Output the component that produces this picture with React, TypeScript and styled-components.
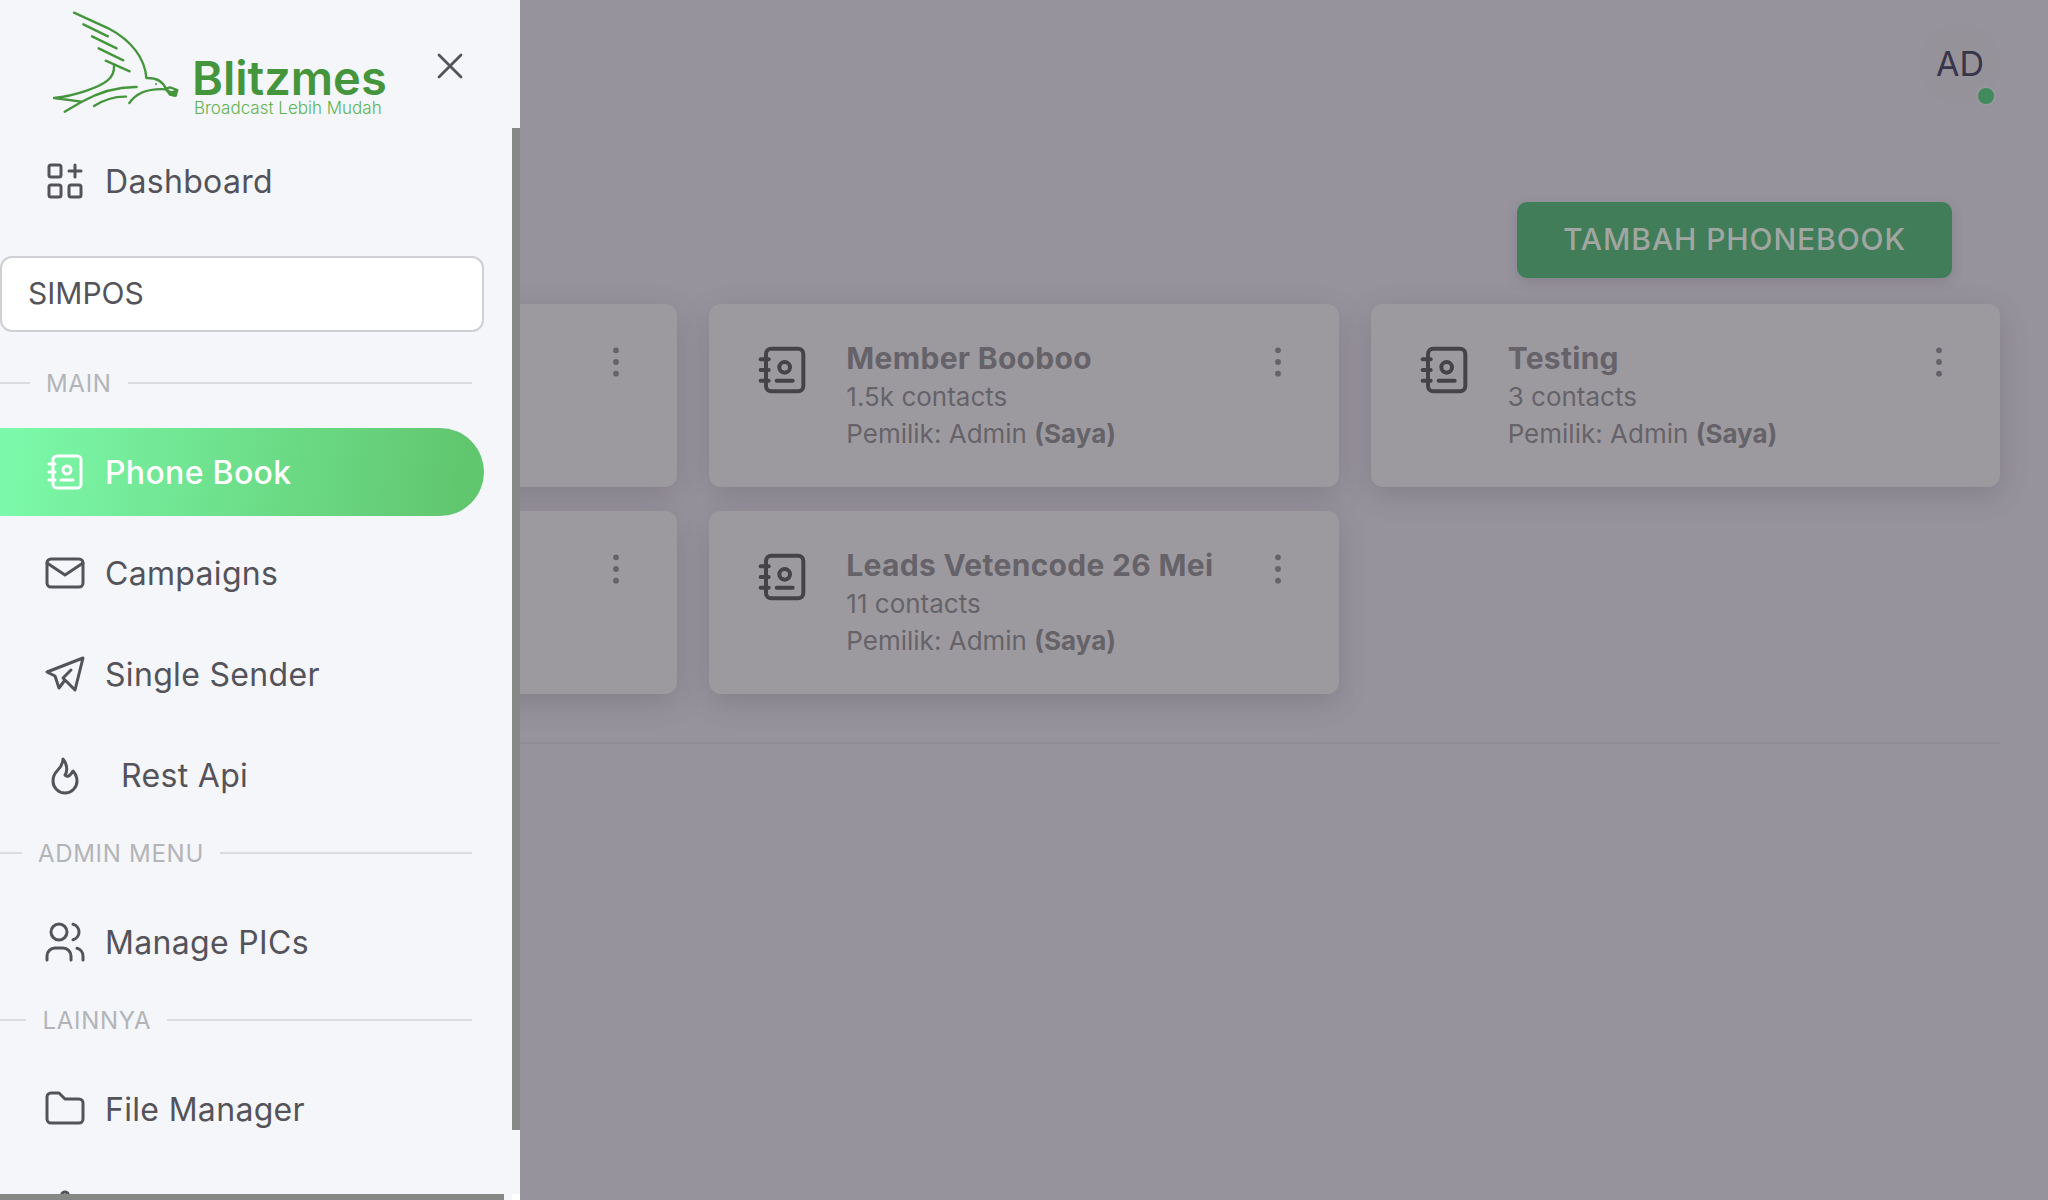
import React from "react";
import styled, { createGlobalStyle } from "styled-components";

const GlobalStyle = createGlobalStyle`
  *, *::before, *::after { box-sizing: border-box; }
  body {
    margin: 0;
    background: #97939d;
    color: #656369;
    font-family: Inter, "Liberation Sans", sans-serif;
  }
  button, select { font: inherit; color: inherit; }
`;

/* ---------- icons ---------- */

const StrokeIcon = styled.svg<{ $size: number }>`
  display: block;
  flex: none;
  width: ${(p) => p.$size}px;
  height: ${(p) => p.$size}px;
  fill: none;
  stroke: currentColor;
  stroke-width: 1.5;
  stroke-linecap: round;
  stroke-linejoin: round;
`;

const shapes = {
  dashboard: [
    "M5 4h4a1 1 0 0 1 1 1v4a1 1 0 0 1 -1 1h-4a1 1 0 0 1 -1 -1v-4a1 1 0 0 1 1 -1z",
    "M5 14h4a1 1 0 0 1 1 1v4a1 1 0 0 1 -1 1h-4a1 1 0 0 1 -1 -1v-4a1 1 0 0 1 1 -1z",
    "M15 14h4a1 1 0 0 1 1 1v4a1 1 0 0 1 -1 1h-4a1 1 0 0 1 -1 -1v-4a1 1 0 0 1 1 -1z",
    "M14 7h6",
    "M17 4v6",
  ],
  book: [
    "M20 6v12a2 2 0 0 1 -2 2h-10a2 2 0 0 1 -2 -2v-12a2 2 0 0 1 2 -2h10a2 2 0 0 1 2 2z",
    "M10 16h6",
    "M11 11a2 2 0 1 0 4 0a2 2 0 1 0 -4 0",
    "M4 8h3",
    "M4 12h3",
    "M4 16h3",
  ],
  mail: [
    "M3 7a2 2 0 0 1 2 -2h14a2 2 0 0 1 2 2v10a2 2 0 0 1 -2 2h-14a2 2 0 0 1 -2 -2v-10z",
    "M3 7l9 6l9 -6",
  ],
  telegram: ["M15 10l-4 4l6 6l4 -16l-18 7l4 2l2 6l3 -4"],
  flame: [
    "M12 12c2 -2.96 0 -7 -1 -8c0 3.038 -1.773 4.741 -3 6c-1.226 1.26 -2 3.24 -2 5a6 6 0 1 0 12 0c0 -1.532 -1.056 -3.94 -2 -5c-1.786 3 -2.791 3 -4 2z",
  ],
  users: [
    "M5 7a4 4 0 1 0 8 0a4 4 0 1 0 -8 0",
    "M3 21v-2a4 4 0 0 1 4 -4h4a4 4 0 0 1 4 4v2",
    "M16 3.13a4 4 0 0 1 0 7.75",
    "M21 21v-2a4 4 0 0 0 -3 -3.85",
  ],
  folder: [
    "M5 4h4l3 3h7a2 2 0 0 1 2 2v8a2 2 0 0 1 -2 2h-14a2 2 0 0 1 -2 -2v-11a2 2 0 0 1 2 -2",
  ],
  settings: [
    "M10.325 4.317c.426 -1.756 2.924 -1.756 3.35 0a1.724 1.724 0 0 0 2.573 1.066c1.543 -.94 3.31 .826 2.37 2.37a1.724 1.724 0 0 0 1.065 2.572c1.756 .426 1.756 2.924 0 3.35a1.724 1.724 0 0 0 -1.066 2.573c.94 1.543 -.826 3.31 -2.37 2.37a1.724 1.724 0 0 0 -2.572 1.065c-.426 1.756 -2.924 1.756 -3.35 0a1.724 1.724 0 0 0 -2.573 -1.066c-1.543 .94 -3.31 -.826 -2.37 -2.37a1.724 1.724 0 0 0 -1.065 -2.572c-1.756 -.426 -1.756 -2.924 0 -3.35a1.724 1.724 0 0 0 1.066 -2.573c-.94 -1.543 .826 -3.31 2.37 -2.37c1 .608 2.296 .07 2.572 -1.065z",
    "M9 12a3 3 0 1 0 6 0a3 3 0 0 0 -6 0",
  ],
  close: ["M18 6l-12 12", "M6 6l12 12"],
  dots: [
    "M11 12a1 1 0 1 0 2 0a1 1 0 1 0 -2 0",
    "M11 19a1 1 0 1 0 2 0a1 1 0 1 0 -2 0",
    "M11 5a1 1 0 1 0 2 0a1 1 0 1 0 -2 0",
  ],
};

type IconName = keyof typeof shapes;

function Icon({ name, size = 48, solid = false }: { name: IconName; size?: number; solid?: boolean }) {
  return (
    <StrokeIcon $size={size} viewBox="0 0 24 24" aria-hidden="true">
      {shapes[name].map((d) => (
        <path key={d} d={d} fill={solid ? "currentColor" : "none"} />
      ))}
    </StrokeIcon>
  );
}

/* ---------- page ---------- */

const Page = styled.div`
  min-height: 100vh;
`;

const TopBar = styled.header`
  display: flex;
  justify-content: flex-end;
  padding: 24px 48px;
`;

const Avatar = styled.button`
  position: relative;
  display: grid;
  place-items: center;
  width: 80px;
  height: 80px;
  padding: 0 0 2px;
  border: 0;
  border-radius: 50%;
  background: #96929a;
  color: #38354a;
  font-size: 34px;
`;

const OnlineDot = styled.span`
  position: absolute;
  right: 4px;
  bottom: -2px;
  width: 20px;
  height: 20px;
  border: 2px solid #9a979d;
  border-radius: 50%;
  background: #418a5e;
`;

const Content = styled.main`
  padding: 74px 48px 48px;
`;

const Toolbar = styled.div`
  display: flex;
  justify-content: flex-end;
  padding-right: 48px;
  margin-bottom: 26px;
`;

const AddButton = styled.button`
  height: 76px;
  padding: 0 46px 2px;
  border: 0;
  border-radius: 10px;
  background: #417d58;
  color: #a1a6a2;
  font-size: 30px;
  font-weight: 500;
  letter-spacing: 0.03em;
  box-shadow: 0 4px 12px rgba(70, 66, 78, 0.2);
`;

const CardGrid = styled.div`
  display: grid;
  grid-template-columns: repeat(3, 1fr);
  gap: 24px 32px;
  padding-bottom: 48px;
  border-bottom: 2px solid #8f8c96;
`;

const Card = styled.article`
  display: flex;
  align-items: flex-start;
  height: 183px;
  padding: 34px 41px 0;
  border-radius: 12px;
  background: #9d9a9f;
  box-shadow: 0 8px 28px rgba(70, 66, 78, 0.24);
`;

const CardIcon = styled.span`
  color: #454248;
`;

const CardText = styled.div`
  flex: 1;
  margin-left: 32px;
`;

const CardTitle = styled.h2`
  margin: 0;
  font-size: 30px;
  line-height: 40px;
  font-weight: 700;
  letter-spacing: 0.01em;
`;

const CardLine = styled.p`
  margin: 0;
  font-size: 26px;
  line-height: 37px;
`;

const MenuButton = styled.button`
  margin-left: auto;
  padding: 4px 0;
  border: 0;
  background: none;
`;

/* ---------- drawer ---------- */

const Drawer = styled.aside`
  position: fixed;
  inset: 0 auto 0 0;
  display: flex;
  flex-direction: column;
  width: 520px;
  background: #f4f6fa;
  color: #54535a;
`;

const DrawerHeader = styled.div`
  display: flex;
  align-items: flex-start;
  height: 128px;
  padding: 10px 48px 0 50px;
`;

const Brand = styled.a`
  display: flex;
  color: #45953d;
  text-decoration: none;
`;

const Bird = styled.svg`
  width: 130px;
  height: 104px;
  fill: none;
  stroke: currentColor;
  stroke-width: 7;
  stroke-linecap: round;
  stroke-linejoin: round;
`;

const BrandText = styled.span`
  display: flex;
  flex-direction: column;
  padding: 44px 0 0 12px;
`;

const BrandName = styled.span`
  font-size: 47px;
  line-height: 48px;
  font-weight: 600;
`;

const BrandTag = styled.span`
  padding-left: 2px;
  color: #5fb350;
  font-size: 17px;
  line-height: 12px;
  font-weight: 300;
`;

const CloseButton = styled.button`
  margin: 34px 0 0 auto;
  padding: 0;
  border: 0;
  background: none;
`;

const Scroller = styled.div`
  flex: 1;
  min-height: 0;
  display: grid;
  grid-template: minmax(0, 1fr) 6px / minmax(0, 1fr) 8px;
`;

const VerticalThumb = styled.div`
  height: 94%;
  background: #868886;
`;

const HorizontalThumb = styled.div`
  width: 504px;
  background: #868886;
`;

const Corner = styled.div`
  background: #ffffff;
`;

const Nav = styled.nav`
  overflow: hidden;
  padding: 9px 28px 0 0;
`;

const NavItem = styled.a<{ $active?: boolean; $gap?: number }>`
  display: flex;
  align-items: center;
  gap: ${(p) => p.$gap ?? 16}px;
  height: 88px;
  padding-left: 41px;
  border-radius: 0 44px 44px 0;
  font-size: 32px;
  font-weight: ${(p) => (p.$active ? 500 : 400)};
  letter-spacing: 0.01em;
  text-decoration: none;
  color: ${(p) => (p.$active ? "#ffffff" : "inherit")};
  background: ${(p) => (p.$active ? "linear-gradient(98deg, #7cfaab, #61c76f 94%)" : "none")};

  & + & {
    margin-top: 13px;
  }
`;

const WorkspaceSelect = styled.select`
  display: block;
  appearance: none;
  width: 100%;
  height: 76px;
  margin: 31px 0 17px;
  padding: 0 26px 2px;
  border: 2px solid #cfd0d3;
  border-radius: 12px;
  background: #ffffff;
  font-size: 30px;
`;

const Section = styled.div`
  display: flex;
  align-items: center;
  height: 68px;
  margin: 0 12px 11px 0;
  color: #b3b4b8;
  font-size: 24px;

  &::before,
  &::after {
    content: "";
    flex: 8 1 0;
    height: 2px;
    background: #dadce0;
  }
  &::after {
    flex-grow: 92;
  }
`;

const SectionLabel = styled.span`
  padding: 0 16px;
  letter-spacing: 0.03em;
`;

const books = [
  {},
  { title: "Member Booboo", count: "1.5k contacts" },
  { title: "Testing", count: "3 contacts" },
  {},
  { title: "Leads Vetencode 26 Mei", count: "11 contacts" },
] as { title?: string; count?: string }[];

function PhonebookCard({ title, count }: { title?: string; count?: string }) {
  return (
    <Card>
      {title && (
        <>
          <CardIcon>
            <Icon name="book" size={64} />
          </CardIcon>
          <CardText>
            <CardTitle>{title}</CardTitle>
            <CardLine>{count}</CardLine>
            <CardLine>
              Pemilik: Admin <b>(Saya)</b>
            </CardLine>
          </CardText>
        </>
      )}
      <MenuButton aria-label="Menu">
        <Icon name="dots" size={40} solid />
      </MenuButton>
    </Card>
  );
}

function BirdMark() {
  return (
    <Bird viewBox="60 30 390 312" aria-hidden="true">
      <path d="M132 38L235 85C305 122 345 175 349 234C378 233 398 243 408 266" />
      <path d="M160 73L234 109M186 109L260 145M206 145L280 181M227 182L299 214" />
      <path d="M252 195C256 236 222 254 170 272C138 283 105 291 72 294L154 305" />
      <path d="M104 335L154 306C208 276 262 260 320 261" />
      <path d="M192 318C224 298 253 289 288 290" />
      <path d="M298 309C320 277 357 265 408 268" />
      <path d="M408 266L420 262L442 270L437 287L420 284L408 268L424 278L440 272" />
      <circle cx="378" cy="252" r="3" fill="currentColor" stroke="none" />
      <path d="M416 276L437 280L434 287L421 284Z" fill="currentColor" />
    </Bird>
  );
}

export default function App() {
  return (
    <>
      <GlobalStyle />
      <Page>
        <TopBar>
          <Avatar>
            AD
            <OnlineDot />
          </Avatar>
        </TopBar>
        <Content>
          <Toolbar>
            <AddButton>TAMBAH PHONEBOOK</AddButton>
          </Toolbar>
          <CardGrid>
            {books.map((b, i) => (
              <PhonebookCard key={i} {...b} />
            ))}
          </CardGrid>
        </Content>
      </Page>

      <Drawer>
        <DrawerHeader>
          <Brand href="#">
            <BirdMark />
            <BrandText>
              <BrandName>Blitzmes</BrandName>
              <BrandTag>Broadcast Lebih Mudah</BrandTag>
            </BrandText>
          </Brand>
          <CloseButton aria-label="Close">
            <Icon name="close" size={44} />
          </CloseButton>
        </DrawerHeader>
        <Scroller>
          <Nav>
            <NavItem href="#">
              <Icon name="dashboard" />
              Dashboard
            </NavItem>
            <WorkspaceSelect aria-label="Workspace" defaultValue="SIMPOS">
              <option>SIMPOS</option>
            </WorkspaceSelect>
            <Section>
              <SectionLabel>MAIN</SectionLabel>
            </Section>
            <NavItem href="#" $active>
              <Icon name="book" />
              Phone Book
            </NavItem>
            <NavItem href="#">
              <Icon name="mail" />
              Campaigns
            </NavItem>
            <NavItem href="#">
              <Icon name="telegram" />
              Single Sender
            </NavItem>
            <NavItem href="#" $gap={32}>
              <Icon name="flame" />
              Rest Api
            </NavItem>
            <Section>
              <SectionLabel>ADMIN MENU</SectionLabel>
            </Section>
            <NavItem href="#">
              <Icon name="users" />
              Manage PICs
            </NavItem>
            <Section>
              <SectionLabel>LAINNYA</SectionLabel>
            </Section>
            <NavItem href="#">
              <Icon name="folder" />
              File Manager
            </NavItem>
            <NavItem href="#" aria-label="Settings">
              <Icon name="settings" />
            </NavItem>
          </Nav>
          <VerticalThumb />
          <HorizontalThumb />
          <Corner />
        </Scroller>
      </Drawer>
    </>
  );
}
